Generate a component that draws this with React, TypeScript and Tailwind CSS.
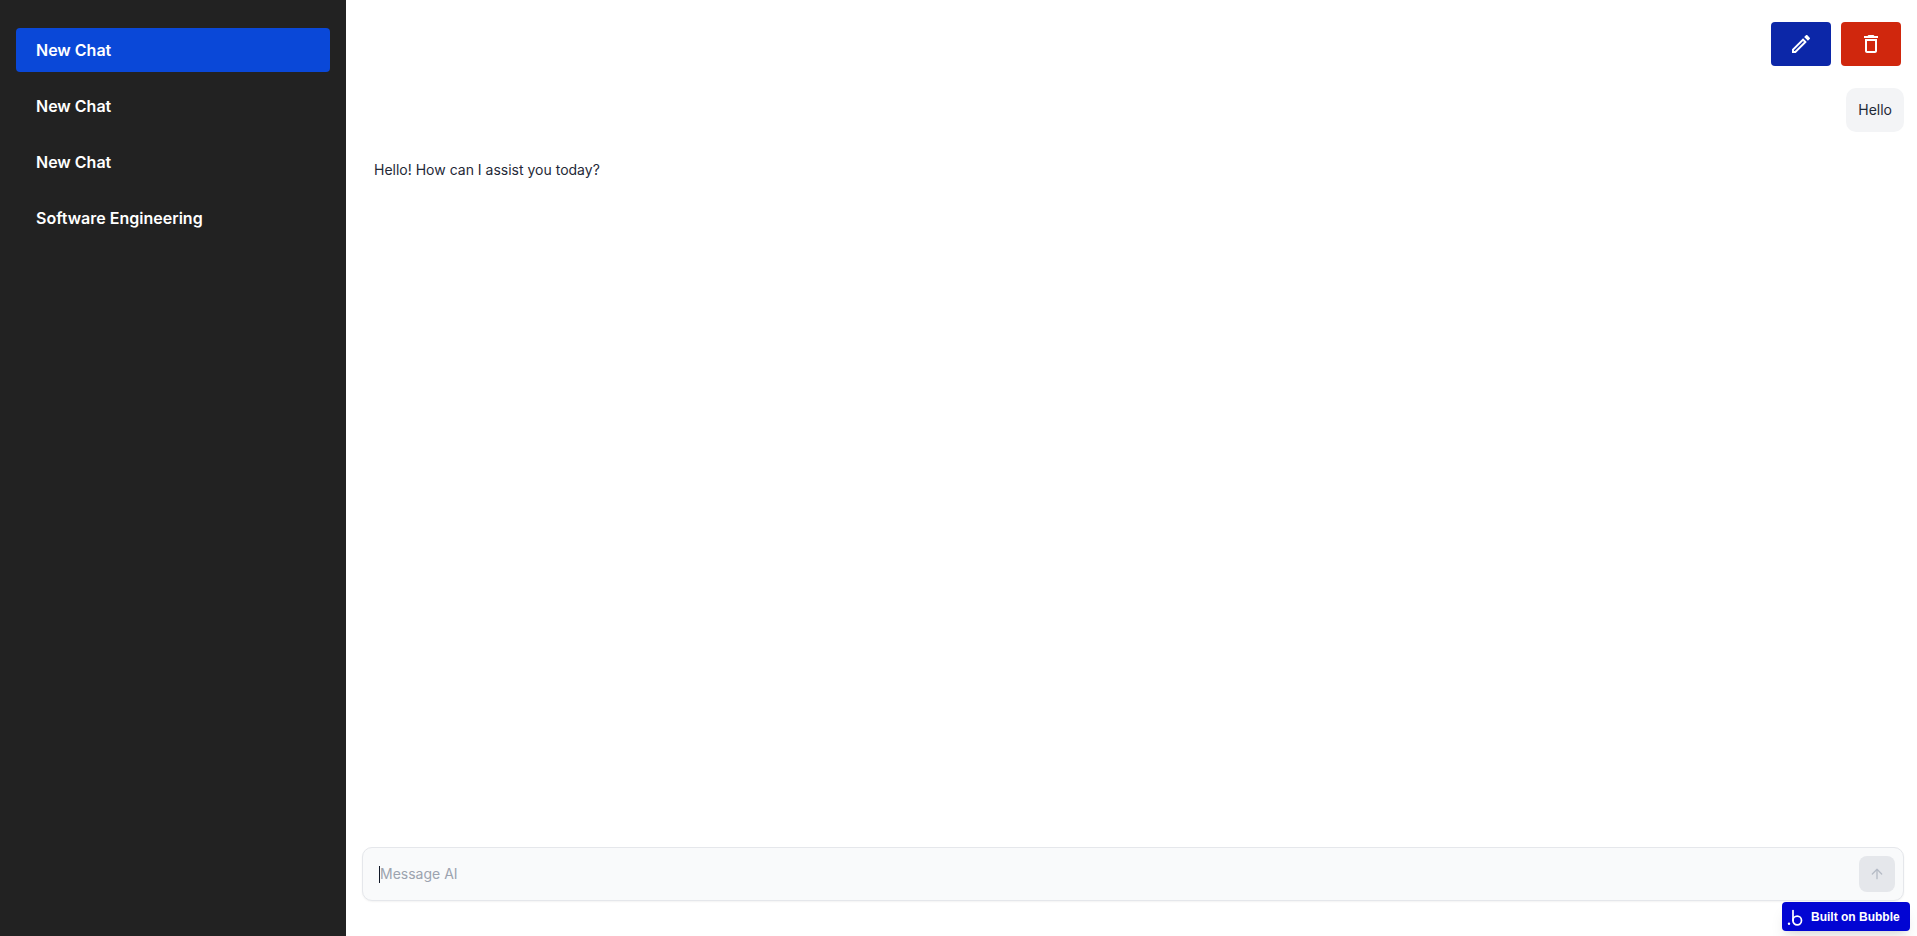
import { ArrowUp } from "lucide-react";
import { MdOutlineDelete, MdOutlineEdit } from "react-icons/md";

const chats = ["New Chat", "New Chat", "New Chat", "Software Engineering"];

function BubbleLogo() {
  return (
    <svg width="16" height="20" viewBox="0 0 16 20" fill="none" className="shrink-0">
      <circle cx="2" cy="16.8" r="1.2" fill="#fff" />
      <path d="M6 3.5v10" stroke="#fff" strokeWidth="1.7" strokeLinecap="round" />
      <circle cx="10.2" cy="13.5" r="4.3" stroke="#fff" strokeWidth="1.7" />
    </svg>
  );
}

export default function App() {
  return (
    <div className="flex h-[936px] w-full overflow-hidden bg-white font-['Inter',sans-serif]">
      <aside className="flex w-[346px] shrink-0 flex-col gap-3 bg-[#222222] px-4 pt-7">
        {chats.map((title, index) => (
          <div
            key={index}
            className={`flex h-11 items-center rounded px-5 text-base font-semibold text-white ${
              index === 0 ? "bg-[#0a48d8]" : ""
            }`}
          >
            {title}
          </div>
        ))}
      </aside>

      <main className="relative flex min-w-0 flex-1 flex-col pl-4 pr-[13px]">
        <div className="flex justify-end gap-2.5 pt-[22px] pr-[3px]">
          <button className="flex h-11 w-[60px] items-center justify-center rounded bg-[#0c27a8] text-white">
            <MdOutlineEdit size={24} />
          </button>
          <button className="flex h-11 w-[60px] items-center justify-center rounded bg-[#d0270d] text-white">
            <MdOutlineDelete size={24} />
          </button>
        </div>

        <div className="mt-[22px] flex justify-end">
          <div className="flex h-11 items-center rounded-[10px] bg-[#f3f4f6] px-3 text-sm text-[#1f2937]">
            Hello
          </div>
        </div>

        <p className="mt-7 pl-3 text-sm leading-5 text-[#1f2937]">
          Hello! How can I assist you today?
        </p>

        <div className="mt-auto mb-[35px] flex h-[54px] items-center justify-between rounded-[10px] border border-[#e5e7eb] bg-[#f9fafb] pl-4 pr-[8px] shadow-xs">
          <div className="flex items-center text-sm text-[#9ca3af]">
            <span className="h-[17px] w-px bg-[#111827]" />
            Message AI
          </div>
          <button className="flex h-9 w-9 items-center justify-center rounded-lg bg-[#e5e7eb] text-[#b6bcc6]">
            <ArrowUp size={16} />
          </button>
        </div>

        <div className="absolute bottom-[5px] right-[7px] flex h-[29px] w-[128px] items-center gap-2 rounded-sm bg-[#0205d3] pl-[5px] font-['Liberation_Sans',sans-serif] text-xs font-bold text-white shadow-lg">
          <BubbleLogo />
          Built on Bubble
        </div>
      </main>
    </div>
  );
}
